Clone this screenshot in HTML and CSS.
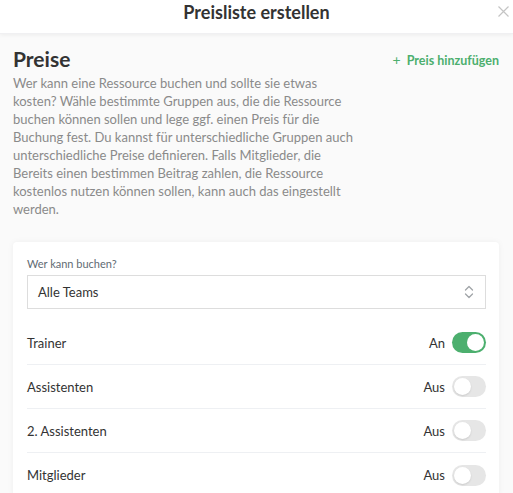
FILE: index.html
```html
<!DOCTYPE html>
<html lang="de">
<head>
<meta charset="utf-8">
<title>Preisliste erstellen</title>
<link rel="stylesheet" href="styles.css">
</head>
<body>
<header class="modal-header">
  <h1 class="modal-title">Preisliste erstellen</h1>
  <button class="close" aria-label="Schließen">
    <svg width="11" height="11" viewBox="0 0 11 11"><path d="M0.5 0.5 L10.5 10.5 M10.5 0.5 L0.5 10.5" stroke="#c4c4c4" stroke-width="1.2" fill="none"/></svg>
  </button>
</header>
<main class="modal-body">
  <section class="intro">
    <div class="intro-head">
      <h2 class="section-title">Preise</h2>
      <a class="add-link" href="#"><span class="plus">+</span> Preis hinzufügen</a>
    </div>
    <p class="intro-text">Wer kann eine Ressource buchen und sollte sie etwas kosten? Wähle bestimmte Gruppen aus, die die Ressource buchen können sollen und lege ggf. einen Preis für die Buchung fest. Du kannst für unterschiedliche Gruppen auch unterschiedliche Preise definieren. Falls Mitglieder, die Bereits einen bestimmen Beitrag zahlen, die Ressource kostenlos nutzen können sollen, kann auch das eingestellt werden.</p>
  </section>
  <section class="card">
    <label class="field-label">Wer kann buchen?</label>
    <div class="select">
      <span>Alle Teams</span>
      <svg class="chev" width="10" height="14" viewBox="0 0 10 14"><path d="M1.5 5 L5 1.5 L8.5 5 M1.5 9 L5 12.5 L8.5 9" stroke="#a0a4a8" stroke-width="1.3" fill="none" stroke-linecap="round" stroke-linejoin="round"/></svg>
    </div>
    <ul class="rows">
      <li class="row"><span class="row-name">Trainer</span><span class="row-state">An<span class="toggle on"><span class="knob"></span></span></span></li>
      <li class="row"><span class="row-name">Assistenten</span><span class="row-state">Aus<span class="toggle"><span class="knob"></span></span></span></li>
      <li class="row"><span class="row-name">2. Assistenten</span><span class="row-state">Aus<span class="toggle"><span class="knob"></span></span></span></li>
      <li class="row"><span class="row-name">Mitglieder</span><span class="row-state">Aus<span class="toggle"><span class="knob"></span></span></span></li>
    </ul>
  </section>
</main>
</body>
</html>
```
FILE: styles.css
```css
* { box-sizing: border-box; }
html, body { margin: 0; padding: 0; }
body {
  font-family: Lato, "Noto Sans", sans-serif;
  background: #fafafa;
  color: #333;
  width: 513px;
  height: 493px;
  overflow: hidden;
}
.modal-header {
  height: 34px;
  background: #fff;
  position: relative;
  box-shadow: 0 1px 4px rgba(0,0,0,0.06);
  border-bottom: 1px solid #f0f0f2;
}
.modal-title {
  margin: 0;
  text-align: center;
  font-size: 18px;
  line-height: 25px;
  font-weight: 700;
  color: #333;
}
.close {
  position: absolute;
  right: 4px;
  top: 6px;
  border: 0;
  background: none;
  padding: 0;
  width: 11px;
  height: 11px;
  display: block;
}
.close svg { display: block; }
.modal-body {
  padding: 12px 14px 0 13px;
}
.intro-head {
  display: flex;
  justify-content: space-between;
  align-items: center;
  margin-bottom: 2px;
}
.section-title {
  margin: 0;
  font-size: 21px;
  line-height: 26px;
  font-weight: 700;
  color: #333;
}
.add-link {
  color: #4caf6e;
  font-weight: 700;
  font-size: 12.5px;
  text-decoration: none;
}
.plus { font-weight: 400; font-size: 14px; margin-right: 3px; }
.intro-text {
  margin: 0;
  width: 350px;
  font-size: 13px;
  line-height: 18px;
  color: #8a8a8a;
}
.card {
  margin-top: 24px;
  background: #fff;
  border-radius: 4px;
  box-shadow: 0 0 6px rgba(0,0,0,0.05);
  padding: 15px 13px 0 14px;
}
.field-label {
  display: block;
  font-size: 11px;
  line-height: 14px;
  color: #5f6b73;
  margin-bottom: 4px;
}
.select {
  height: 34px;
  border: 1px solid #ddd;
  display: flex;
  align-items: center;
  justify-content: space-between;
  padding: 0 11px 0 10px;
  font-size: 13px;
  color: #333;
}
.chev { display: block; }
.rows {
  list-style: none;
  margin: 12px 0 0;
  padding: 0;
}
.row {
  display: flex;
  justify-content: space-between;
  align-items: center;
  height: 44px;
  border-bottom: 1px solid #eef0f3;
  font-size: 13px;
  color: #333;
}
.row:last-child { border-bottom: 0; }
.row-state {
  display: flex;
  align-items: center;
  gap: 7px;
}
.toggle {
  width: 34px;
  height: 21px;
  border-radius: 11px;
  background: #e6e6e6;
  position: relative;
  display: inline-block;
}
.toggle .knob {
  position: absolute;
  top: 2px;
  left: 2px;
  width: 17px;
  height: 17px;
  border-radius: 50%;
  background: #fff;
  box-shadow: 0 1px 2px rgba(0,0,0,0.12);
}
.toggle.on { background: #4caf6e; }
.toggle.on .knob { left: 15px; box-shadow: none; }
```
